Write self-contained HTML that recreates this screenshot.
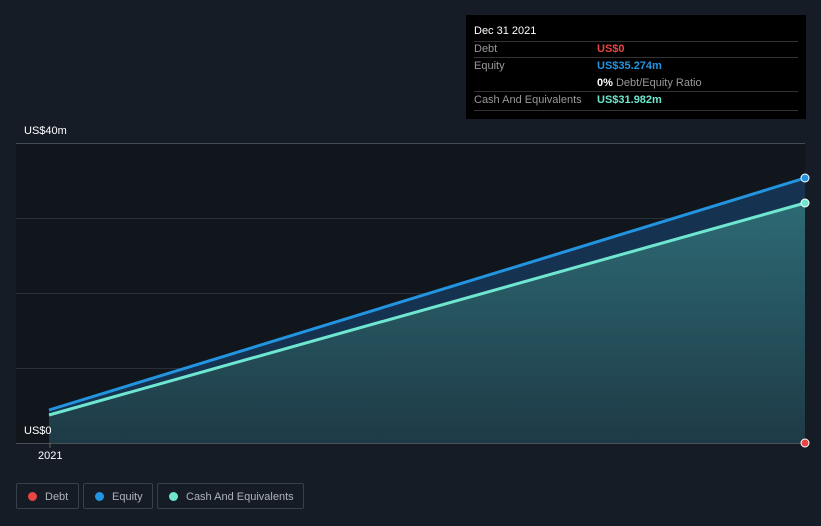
<!DOCTYPE html><html><head><style>
body{margin:0;width:821px;height:526px;background:#161c26;font-family:"Liberation Sans",sans-serif;overflow:hidden;position:relative}
.t{position:absolute;font-size:11px;color:#fff}
.tip{position:absolute;left:466px;top:15px;width:340px;height:104px;background:#000;}
.tip .r{position:absolute;left:8px;width:324px;border-bottom:1px solid #333;font-size:11px;color:#999;height:16px}
.leg{position:absolute;top:483px;height:26px;border:1px solid #3a404a;border-radius:2px;color:#aeb3bb;font-size:11px;line-height:26px;box-sizing:border-box}
.leg i{position:absolute;left:11px;top:8px;width:9px;height:9px;border-radius:50%}
</style></head><body>
<svg width="821" height="526" style="position:absolute;left:0;top:0">
<defs><linearGradient id="g" x1="0" y1="0" x2="0" y2="1"><stop offset="0" stop-color="#2d6a74"/><stop offset="1" stop-color="#1e3a46"/></linearGradient></defs>
<rect x="16" y="143" width="789" height="300" fill="#11151c"/>
<line x1="16" y1="143.5" x2="805" y2="143.5" stroke="#444a52"/>
<line x1="16" y1="218.5" x2="805" y2="218.5" stroke="#2a3038"/>
<line x1="16" y1="293.5" x2="805" y2="293.5" stroke="#2a3038"/>
<line x1="16" y1="368.5" x2="805" y2="368.5" stroke="#2a3038"/>
<polygon points="49,410 805,178 805,203 49,415" fill="#153250"/>
<polygon points="49,415 805,203 805,443 49,443" fill="url(#g)"/>
<line x1="16" y1="443.5" x2="805" y2="443.5" stroke="#4a5058"/>
<line x1="50" y1="443" x2="50" y2="448" stroke="#666"/>
<line x1="49" y1="410" x2="805" y2="178" stroke="#2394e0" stroke-width="3"/>
<line x1="49" y1="415" x2="805" y2="203" stroke="#6ee6d0" stroke-width="3"/>
<circle cx="805" cy="178" r="4" fill="#2394e0" stroke="#fff" stroke-width="1"/>
<circle cx="805" cy="203" r="4" fill="#6ee6d0" stroke="#fff" stroke-width="1"/>
<circle cx="805" cy="443" r="4" fill="#e84545" stroke="#fff" stroke-width="1"/>
</svg>
<div class="t" style="left:24px;top:125px">US$40m</div>
<div class="t" style="left:24px;top:425px">US$0</div>
<div class="t" style="left:38px;top:450px">2021</div>
<div class="tip">
<div class="t" style="left:8px;top:10px">Dec 31 2021</div>
<div style="position:absolute;left:8px;top:26px;width:324px;border-top:1px solid #333"></div>
<div class="r" style="top:26px"><span style="position:absolute;top:2px">Debt</span><span style="position:absolute;left:123px;top:2px;color:#e84545;font-weight:bold">US$0</span></div>
<div class="r" style="top:43px;border:0"><span style="position:absolute;top:2px">Equity</span><span style="position:absolute;left:123px;top:2px;color:#2394e0;font-weight:bold">US$35.274m</span></div>
<div class="r" style="top:60px"><span style="position:absolute;left:123px;top:2px"><b style="color:#fff">0%</b> Debt/Equity Ratio</span></div>
<div class="r" style="top:77px;height:18px"><span style="position:absolute;top:2px">Cash And Equivalents</span><span style="position:absolute;left:123px;top:2px;color:#6ee6d0;font-weight:bold">US$31.982m</span></div>
</div>
<div class="leg" style="left:16px;width:63px"><i style="background:#e84545"></i><span style="position:absolute;left:28px">Debt</span></div>
<div class="leg" style="left:83px;width:70px"><i style="background:#2394e0"></i><span style="position:absolute;left:28px">Equity</span></div>
<div class="leg" style="left:157px;width:147px"><i style="background:#6ee6d0"></i><span style="position:absolute;left:28px">Cash And Equivalents</span></div>
</body></html>
